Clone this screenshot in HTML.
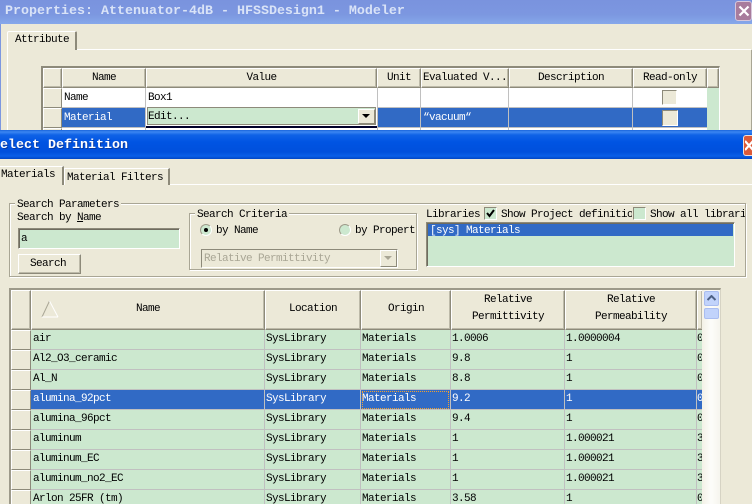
<!DOCTYPE html>
<html><head><meta charset="utf-8">
<style>
html,body{margin:0;padding:0;width:752px;height:504px;overflow:hidden}
body{position:relative;background:#ece9d8;font:11px/14px "Liberation Mono",monospace;letter-spacing:-.6px;color:#000}
div,span{position:absolute;box-sizing:border-box;white-space:pre}
#w{left:0;top:0;width:752px;height:504px;overflow:hidden}
.t{height:14px}
.h{background:#ece9d8;border:1px solid;border-color:#fff #8d8a7a #8d8a7a #fff;box-shadow:inset -1px -1px 0 #bdbaa9;text-align:center;display:block}
.b{background:#ece9d8;border:1px solid;border-color:#fff #8d8a7a #8d8a7a #fff}
.sink{border:1px solid;border-color:#8d8a7a #fff #fff #8d8a7a;box-shadow:inset 1px 1px 0 #6f6c5f}
.line{background:#c0c0c0}
.grp{border:1px solid #a9a695;box-shadow:inset 1px 1px 0 #fff,1px 1px 0 #fff}
.lg{background:#ece9d8;padding:0 2px;height:14px}
.r{left:31px;width:671px;height:20px;background:#cce8cf;border-bottom:1px solid #c0c0c0;overflow:hidden;line-height:19px}
.r span{top:0;height:19px}
.r .c1{left:2px;width:233px}.r .c2{left:235px;width:96px}.r .c3{left:331px;width:90px}.r .c4{left:421px;width:114px}.r .c5{left:535px;width:132px}.r .c6{left:666px;width:8px}
.r i{position:absolute;top:0;width:1px;height:19px;background:#c0c0c0}
.s{background:#316ac5;color:#fff}
</style></head><body><div id="w">

<!-- back window title -->
<div style="left:0;top:0;width:752px;height:24px;background:linear-gradient(#7a93de,#7c97e0 60%,#86a8ea)"></div>
<div style="left:5px;top:3px;height:17px;font:bold 13.33px/17px 'Liberation Mono',monospace;letter-spacing:0;color:#d9e3f7">Properties: Attenuator-4dB - HFSSDesign1 - Modeler</div>
<div style="left:735px;top:1px;width:17px;height:20px;background:#a87c9c;border:1px solid #d8c8dc;border-radius:3px"></div>
<svg style="position:absolute;left:738px;top:5px" width="12" height="12"><path d="M1.500 1.500L10.500 10.500M10.500 1.500L1.500 10.500" stroke="#fff" stroke-width="2.200"/></svg>
<div style="left:0;top:24px;width:1px;height:106px;background:#7c97e0"></div>

<!-- attribute tab -->
<div style="left:8px;top:49px;width:743px;height:1px;background:#fff"></div>
<div style="left:7px;top:50px;width:1px;height:80px;background:#fff"></div>
<div style="left:751px;top:50px;width:1px;height:80px;background:#a9a695"></div>
<div style="left:7px;top:31px;width:70px;height:19px;background:#ece9d8;border-top:1px solid #fff;border-left:1px solid #fff;border-right:2px solid #8d8a7a;border-radius:2px 2px 0 0"></div>
<div class="t" style="left:15px;top:33px">Attribute</div>

<!-- top grid -->
<div style="left:41px;top:66px;width:679px;height:64px;background:#ece9d8;border-top:2px solid #8d8a7a;border-left:2px solid #8d8a7a;border-right:1px solid #fff"></div>
<div class="h" style="left:43px;top:68px;width:19px;height:20px"></div>
<div class="h" style="left:62px;top:68px;width:84px;height:20px;line-height:19px">Name</div>
<div class="h" style="left:146px;top:68px;width:231px;height:20px;line-height:19px">Value</div>
<div class="h" style="left:377px;top:68px;width:44px;height:20px;line-height:19px">Unit</div>
<div class="h" style="left:421px;top:68px;width:88px;height:20px;line-height:19px">Evaluated V...</div>
<div class="h" style="left:509px;top:68px;width:124px;height:20px;line-height:19px">Description</div>
<div class="h" style="left:633px;top:68px;width:74px;height:20px;line-height:19px">Read-only</div>
<div class="h" style="left:707px;top:68px;width:12px;height:20px"></div>
<div class="b" style="left:43px;top:88px;width:19px;height:20px"></div>
<div class="b" style="left:43px;top:108px;width:19px;height:20px"></div>
<div class="b" style="left:43px;top:128px;width:19px;height:4px"></div>
<div style="left:62px;top:88px;width:645px;height:19px;background:#fff"></div>
<div style="left:707px;top:88px;width:12px;height:42px;background:#cce8cf"></div>
<div class="line" style="left:62px;top:107px;width:645px;height:1px"></div>
<div style="left:62px;top:108px;width:645px;height:19px;background:#316ac5"></div>
<div style="left:146px;top:107px;width:231px;height:20px;background:#fff"></div>
<div class="line" style="left:62px;top:127px;width:645px;height:1px"></div>
<div style="left:62px;top:128px;width:645px;height:2px;background:#fff"></div>
<div style="left:145px;top:126px;width:232px;height:2px;background:#00002a"></div>
<div class="line" style="left:145px;top:88px;width:1px;height:42px"></div>
<div class="line" style="left:377px;top:88px;width:1px;height:42px"></div>
<div class="line" style="left:508px;top:88px;width:1px;height:42px"></div>
<div class="line" style="left:632px;top:88px;width:1px;height:42px"></div>
<div class="line" style="left:420px;top:88px;width:1px;height:42px"></div>
<div class="t" style="left:64px;top:91px">Name</div>
<div class="t" style="left:148px;top:91px">Box1</div>
<div class="t" style="left:64px;top:111px;color:#fff">Material</div>
<div style="left:147px;top:107px;width:229px;height:18px;background:#cce8cf;border:1px solid #8d8a7a;border-top-width:1px"></div>
<div class="t" style="left:148px;top:110px">Edit...</div>
<div class="b" style="left:358px;top:109px;width:17px;height:15px"></div>
<svg style="position:absolute;left:362px;top:114px" width="9" height="5"><path d="M0 0H8L4 4Z" fill="#000"/></svg>
<div style="left:662px;top:90px;width:15px;height:15px;background:#ece9d8;border:1px solid;border-color:#8d8a7a #fff #fff #8d8a7a"></div>
<div style="left:662px;top:110px;width:16px;height:16px;background:#ece9d8;border:1px solid;border-color:#8d8a7a #fff #fff #8d8a7a"></div>
<div class="t" style="left:423px;top:111px;color:#fff">“vacuum“</div>

<!-- front window title -->
<div style="left:0;top:130px;width:752px;height:29px;background:linear-gradient(#1a64dc 0,#3b86f2 2px,#0f62e6 5px,#0054e3 12px,#0050dc 22px,#0a5fe8 26px,#0046c4 29px)"></div>
<div style="left:0;top:137px;height:17px;font:bold 13.33px/17px 'Liberation Mono',monospace;letter-spacing:0;color:#fff;text-shadow:1px 1px 0 #0a3aa0">elect Definition</div>
<div style="left:743px;top:135px;width:12px;height:21px;background:#dd5a38;border:1px solid #f0e0d8;border-radius:3px"></div>
<svg style="position:absolute;left:745px;top:140px" width="7" height="12"><path d="M0 1L8 10M8 1L0 10" stroke="#fff" stroke-width="2.200"/></svg>

<!-- front tabs -->
<div style="left:0;top:184px;width:752px;height:1px;background:#fff"></div>
<div style="left:0;top:166px;width:64px;height:19px;background:#ece9d8;border-top:1px solid #fff;border-right:2px solid #8d8a7a"></div>
<div class="t" style="left:1px;top:168px">Materials</div>
<div style="left:64px;top:168px;width:106px;height:17px;background:#ece9d8;border-top:1px solid #fff;border-left:1px solid #fff;border-right:2px solid #8d8a7a"></div>
<div class="t" style="left:67px;top:171px">Material Filters</div>

<!-- search parameters -->
<div class="grp" style="left:9px;top:203px;width:737px;height:74px"></div>
<div class="lg" style="left:15px;top:198px">Search Parameters</div>
<div class="t" style="left:17px;top:211px">Search by <u>N</u>ame</div>
<div class="sink" style="left:18px;top:228px;width:162px;height:21px;background:#cce8cf"></div>
<div class="t" style="left:21px;top:232px">a</div>
<div class="b" style="left:18px;top:254px;width:63px;height:20px;box-shadow:inset -1px -1px 0 #bdbaa9"></div>
<div class="t" style="left:30px;top:257px">Search</div>

<!-- criteria -->
<div class="grp" style="left:189px;top:213px;width:228px;height:57px"></div>
<div class="lg" style="left:195px;top:208px">Search Criteria</div>
<div style="left:200px;top:224px;width:12px;height:12px;border-radius:50%;background:#cce8cf;border:1px solid #9d9a8a;border-right-color:#fff;border-bottom-color:#fff"></div>
<div style="left:204px;top:228px;width:4px;height:4px;border-radius:50%;background:#000"></div>
<div class="t" style="left:216px;top:224px">by Name</div>
<div style="left:339px;top:224px;width:12px;height:12px;border-radius:50%;background:#cce8cf;border:1px solid #9d9a8a;border-right-color:#fff;border-bottom-color:#fff"></div>
<div class="t" style="left:355px;top:224px;width:60px;overflow:hidden">by Property</div>
<div class="sink" style="left:201px;top:249px;width:197px;height:19px;box-shadow:none;background:#ece9d8"></div>
<div class="t" style="left:204px;top:252px;color:#a9a695">Relative Permittivity</div>
<div class="b" style="left:380px;top:250px;width:17px;height:17px"></div>
<svg style="position:absolute;left:384px;top:256px" width="9" height="5"><path d="M0 0H8L4 4Z" fill="#a9a695"/></svg>

<!-- libraries -->
<div class="t" style="left:426px;top:208px">Libraries</div>
<div style="left:484px;top:207px;width:13px;height:13px;background:#cce8cf;border:1px solid;border-color:#8d8a7a #fff #fff #8d8a7a"></div>
<svg style="position:absolute;left:486px;top:209px" width="9" height="9"><path d="M1 4L3.500 7L8 1" fill="none" stroke="#000" stroke-width="2"/></svg>
<div class="t" style="left:501px;top:208px;width:131px;overflow:hidden">Show Project definitions</div>
<div style="left:633px;top:207px;width:13px;height:13px;background:#cce8cf;border:1px solid;border-color:#8d8a7a #fff #fff #8d8a7a"></div>
<div class="t" style="left:650px;top:208px;width:95px;overflow:hidden">Show all libraries</div>
<div class="sink" style="left:426px;top:222px;width:309px;height:45px;background:#cce8cf"></div>
<div style="left:428px;top:224px;width:305px;height:12px;background:#316ac5"></div>
<div class="t" style="left:430px;top:224px;color:#fff">[sys] Materials</div>

<!-- material grid frame -->
<div style="left:9px;top:288px;width:712px;height:216px;border-top:2px solid #9d9a8a;border-left:2px solid #9d9a8a;border-right:1px solid #d6d3c4"></div>
<div class="h" style="left:11px;top:290px;width:20px;height:40px"></div>
<div class="h" style="left:31px;top:290px;width:234px;height:40px;line-height:36px">Name</div>
<svg style="position:absolute;left:41px;top:300px" width="18" height="18"><path d="M8.500 1L1 17" stroke="#a9a695" fill="none"/><path d="M8.500 1L17 17M1 17H17" stroke="#fff" fill="none"/></svg>
<div class="h" style="left:265px;top:290px;width:96px;height:40px;line-height:36px">Location</div>
<div class="h" style="left:361px;top:290px;width:90px;height:40px;line-height:36px">Origin</div>
<div class="h" style="left:451px;top:290px;width:114px;height:40px;line-height:17px;padding-top:1px">Relative
Permittivity</div>
<div class="h" style="left:565px;top:290px;width:132px;height:40px;line-height:17px;padding-top:1px">Relative
Permeability</div>
<div class="h" style="left:697px;top:290px;width:6px;height:40px"></div>

<!-- row headers -->
<div class="b" style="left:11px;top:330px;width:20px;height:20px"></div>
<div class="b" style="left:11px;top:350px;width:20px;height:20px"></div>
<div class="b" style="left:11px;top:370px;width:20px;height:20px"></div>
<div class="b" style="left:11px;top:390px;width:20px;height:20px"></div>
<div class="b" style="left:11px;top:410px;width:20px;height:20px"></div>
<div class="b" style="left:11px;top:430px;width:20px;height:20px"></div>
<div class="b" style="left:11px;top:450px;width:20px;height:20px"></div>
<div class="b" style="left:11px;top:470px;width:20px;height:20px"></div>
<div class="b" style="left:11px;top:490px;width:20px;height:14px;border-bottom:0"></div>

<!-- rows -->
<div class="r" style="top:330px"><span class="c1">air</span><span class="c2">SysLibrary</span><span class="c3">Materials</span><span class="c4">1.0006</span><span class="c5">1.0000004</span><span class="c6">0</span><i style="left:233px"></i><i style="left:329px"></i><i style="left:419px"></i><i style="left:533px"></i><i style="left:665px"></i></div>
<div class="r" style="top:350px"><span class="c1">Al2_O3_ceramic</span><span class="c2">SysLibrary</span><span class="c3">Materials</span><span class="c4">9.8</span><span class="c5">1</span><span class="c6">0</span><i style="left:233px"></i><i style="left:329px"></i><i style="left:419px"></i><i style="left:533px"></i><i style="left:665px"></i></div>
<div class="r" style="top:370px"><span class="c1">Al_N</span><span class="c2">SysLibrary</span><span class="c3">Materials</span><span class="c4">8.8</span><span class="c5">1</span><span class="c6">0</span><i style="left:233px"></i><i style="left:329px"></i><i style="left:419px"></i><i style="left:533px"></i><i style="left:665px"></i></div>
<div class="r s" style="top:390px"><span class="c1">alumina_92pct</span><span class="c2">SysLibrary</span><span class="c3">Materials</span><span class="c4">9.2</span><span class="c5">1</span><span class="c6">0</span><i style="left:233px"></i><i style="left:329px"></i><i style="left:419px"></i><i style="left:533px"></i><i style="left:665px"></i><div style="left:331px;top:1px;width:87px;height:18px;border:1px dotted #f0a030"></div></div>
<div class="r" style="top:410px"><span class="c1">alumina_96pct</span><span class="c2">SysLibrary</span><span class="c3">Materials</span><span class="c4">9.4</span><span class="c5">1</span><span class="c6">0</span><i style="left:233px"></i><i style="left:329px"></i><i style="left:419px"></i><i style="left:533px"></i><i style="left:665px"></i></div>
<div class="r" style="top:430px"><span class="c1">aluminum</span><span class="c2">SysLibrary</span><span class="c3">Materials</span><span class="c4">1</span><span class="c5">1.000021</span><span class="c6">3</span><i style="left:233px"></i><i style="left:329px"></i><i style="left:419px"></i><i style="left:533px"></i><i style="left:665px"></i></div>
<div class="r" style="top:450px"><span class="c1">aluminum_EC</span><span class="c2">SysLibrary</span><span class="c3">Materials</span><span class="c4">1</span><span class="c5">1.000021</span><span class="c6">3</span><i style="left:233px"></i><i style="left:329px"></i><i style="left:419px"></i><i style="left:533px"></i><i style="left:665px"></i></div>
<div class="r" style="top:470px"><span class="c1">aluminum_no2_EC</span><span class="c2">SysLibrary</span><span class="c3">Materials</span><span class="c4">1</span><span class="c5">1.000021</span><span class="c6">3</span><i style="left:233px"></i><i style="left:329px"></i><i style="left:419px"></i><i style="left:533px"></i><i style="left:665px"></i></div>
<div class="r" style="top:490px;height:14px;border-bottom:0"><span class="c1">Arlon 25FR (tm)</span><span class="c2">SysLibrary</span><span class="c3">Materials</span><span class="c4">3.58</span><span class="c5">1</span><span class="c6">0</span><i style="left:233px"></i><i style="left:329px"></i><i style="left:419px"></i><i style="left:533px"></i><i style="left:665px"></i></div>

<!-- scrollbar -->
<div style="left:702px;top:290px;width:18px;height:214px;background:linear-gradient(90deg,#f3f1e6,#fdfdfa 50%,#f6f5ee)"></div>
<div style="left:704px;top:291px;width:15px;height:15px;background:#c1d3fb;border:1px solid #a9bdf0;border-radius:2px"></div>
<svg style="position:absolute;left:707px;top:295px" width="9" height="7"><path d="M0.500 5L4.500 1L8.500 5" fill="none" stroke="#4d6185" stroke-width="2"/></svg>
<div style="left:704px;top:308px;width:15px;height:11px;background:#c1d3fb;border:1px solid #a9bdf0;border-radius:2px"></div>
</div></body></html>
